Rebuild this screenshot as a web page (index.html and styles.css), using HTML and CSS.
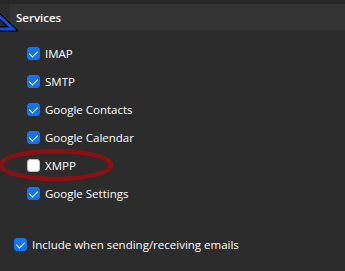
FILE: index.html
```html
<!DOCTYPE html>
<html lang="en">
<head>
    <meta charset="UTF-8">
    <title>Services</title>
    <link rel="stylesheet" href="styles.css">
</head>
<body>
    <div class="top-strip"></div>
    <div class="section-head">
        <svg class="corner-mark" width="18" height="22" viewBox="0 0 18 22">
            <path d="M-3 2 L13 17 L-3 17 Z" fill="none" stroke="#000" stroke-width="5.5" stroke-linejoin="miter"/>
            <path d="M-3 2 L13 17 L-3 17 Z" fill="none" stroke="#1450e6" stroke-width="3" stroke-linejoin="miter"/>
        </svg>
        <span class="section-title">Services</span>
    </div>

    <ul class="services">
        <li><span class="box checked"></span>IMAP</li>
        <li><span class="box checked"></span>SMTP</li>
        <li><span class="box checked"></span>Google Contacts</li>
        <li><span class="box checked"></span>Google Calendar</li>
        <li class="marked"><span class="box"></span>XMPP
            <svg class="ring" width="120" height="36" viewBox="0 0 120 36">
                <ellipse cx="58" cy="18" rx="55" ry="14" fill="none" stroke="#8a1013" stroke-width="4.5"/>
            </svg>
        </li>
        <li><span class="box checked"></span>Google Settings</li>
    </ul>

    <div class="include-row"><span class="box checked"></span>Include when sending/receiving emails</div>
</body>
</html>
```

FILE: styles.css
```css
* {margin:0;padding:0;box-sizing:border-box;}
body {background-color:#2c2c2c;color:#fff;font-family:'Open Sans', 'Noto Sans', sans-serif;font-size:11.5px;width:345px;height:271px;overflow:hidden;}
.top-strip {height:4px;background-color:#272727;}
.section-head {position:relative;height:26px;margin-left:10px;background-color:#333333;display:flex;align-items:center;padding-left:6px;}
.section-title {font-size:11.5px;font-weight:600;}
.corner-mark {position:absolute;left:-10px;top:8px;}
.services {list-style:none;margin-top:9px;padding-left:27px;}
.services li {height:28px;display:flex;align-items:center;gap:5px;position:relative;}
.box {width:13px;height:13px;border-radius:3px;background-color:#fff;border:1px solid #bdbdbd;flex-shrink:0;position:relative;}
.box.checked {background-color:#1473f0;border-color:#1473f0;}
.box.checked::after {content:'';position:absolute;left:3px;top:1px;width:4px;height:7px;border-right:1.6px solid #fff;border-bottom:1.6px solid #fff;transform:rotate(45deg);}
.ring {position:absolute;left:-29px;top:-4px;pointer-events:none;}
.include-row {display:flex;align-items:center;gap:5px;height:28px;margin-top:23px;padding-left:14px;}
```
